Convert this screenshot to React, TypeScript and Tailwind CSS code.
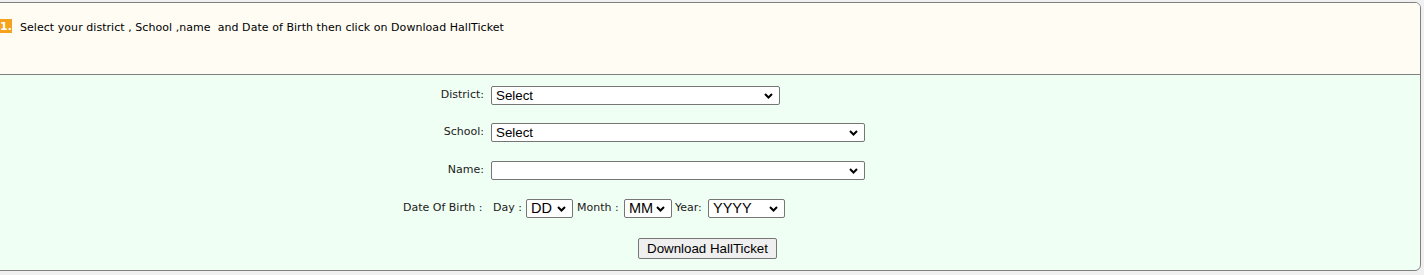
import type { ReactNode } from 'react';

function Chevron() {
  return (
    <svg width="9" height="6" viewBox="0 0 9 6" className="pointer-events-none absolute right-[7px] top-1/2 -translate-y-1/2">
      <polyline points="1,1 4.5,4.5 8,1" fill="none" stroke="#000" strokeWidth="2" />
    </svg>
  );
}

function Select({ width, value, big }: { width: string; value?: string; big?: boolean }) {
  return (
    <div className={`relative h-[19px] shrink-0 ${width}`}>
      <select
        defaultValue=""
        className={`h-full w-full appearance-none rounded-[2px] border border-[#767676] bg-white pl-[4px] pr-[18px] font-['Liberation_Sans',Arial,sans-serif] text-black ${big ? 'text-[14.5px] leading-[17px]' : 'text-[13.33px] leading-[17px]'}`}
      >
        <option value="">{value ?? ''}</option>
      </select>
      <Chevron />
    </div>
  );
}

function Row({ label, children, className }: { label: string; children: ReactNode; className?: string }) {
  return (
    <div className={`flex items-center pl-[412px] ${className ?? ''}`}>
      <span className="w-[81px] text-right">{label}</span>
      <div className="ml-[7px]">{children}</div>
    </div>
  );
}

export default function App() {
  return (
    <div className="h-[275px] w-[1424px] overflow-hidden bg-[#f0f0f0] pt-[2px] pr-[3px] font-['DejaVu_Sans',Verdana,sans-serif] text-[11px] text-[#1a1a1a]">
      <div className="-ml-[10px] flex h-[269px] flex-col overflow-hidden rounded-[6px] border border-[#808080] bg-[#f0fff4]">
        <div className="flex h-[72px] shrink-0 items-start gap-[8px] border-b border-[#808080] bg-[#fffcf4] pl-[9px] pt-[16px]">
          <span className="flex h-[14px] w-[12px] items-center justify-center bg-[#f5a31c] font-bold leading-none text-white">1.</span>
          <span className="whitespace-pre pt-[1px] leading-[15px] tracking-[0.05px] text-black">Select your district , School ,name  and Date of Birth then click on Download HallTicket</span>
        </div>

        <div className="flex flex-col pt-[11px]">
          <Row label="District:">
            <Select width="w-[289px]" value="Select" />
          </Row>
          <Row label="School:" className="mt-[18px]">
            <Select width="w-[374px]" value="Select" />
          </Row>
          <Row label="Name:" className="mt-[19px]">
            <Select width="w-[374px]" />
          </Row>

          <div className="mt-[19px] flex items-center whitespace-nowrap pl-[412px]">
            <span className="w-[78px]">Date Of Birth :</span>
            <span className="w-[41px] text-right">Day :</span>
            <div className="ml-[4px]">
              <Select width="w-[47px]" value="DD" big />
            </div>
            <span className="ml-[4px] w-[42px]">Month :</span>
            <div className="ml-[5px]">
              <Select width="w-[48px]" value="MM" big />
            </div>
            <span className="ml-[3px] w-[28px]">Year:</span>
            <div className="ml-[5px]">
              <Select width="w-[77px]" value="YYYY" big />
            </div>
          </div>

          <div className="mt-[20px] pl-[647px]">
            <button className="h-[21px] w-[139px] rounded-[2px] border border-[#767676] bg-[#efefef] font-['Liberation_Sans',Arial,sans-serif] text-[13.33px] text-black">
              Download HallTicket
            </button>
          </div>
        </div>
      </div>
    </div>
  );
}
